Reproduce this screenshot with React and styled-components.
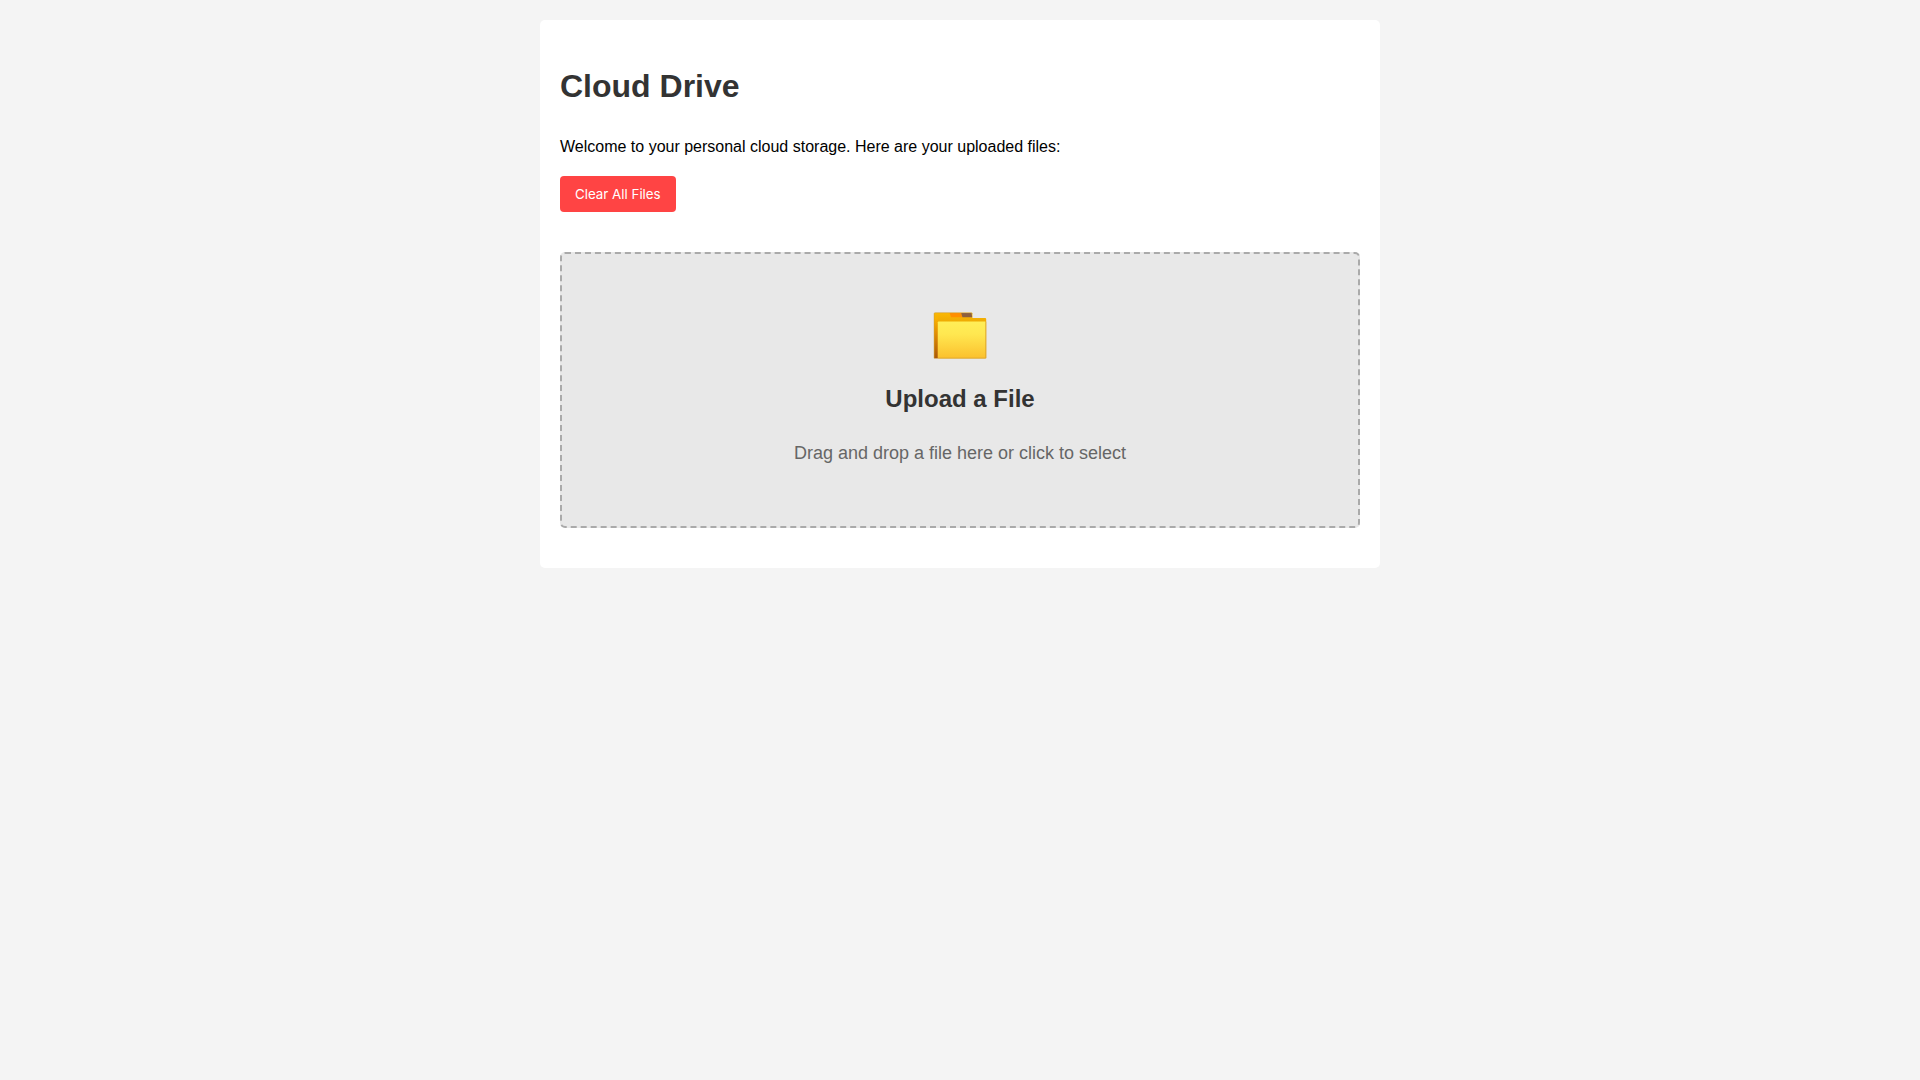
import { useRef } from "react";
import styled, { createGlobalStyle } from "styled-components";

export default function App() {
  const fileInput = useRef(null);

  const clearFiles = () => {
    fileInput.current.value = "";
  };

  return (
    <>
      <GlobalStyle />
      <SContainer>
        <STitle>Cloud Drive</STitle>
        <SWelcome>
          Welcome to your personal cloud storage. Here are your uploaded files:
        </SWelcome>
        <SClearBtn type="button" onClick={clearFiles}>
          Clear All Files
        </SClearBtn>
        <SUploadArea htmlFor="file-upload">
          <FolderIcon />
          <SUploadTitle>Upload a File</SUploadTitle>
          <SUploadTxt>Drag and drop a file here or click to select</SUploadTxt>
        </SUploadArea>
        <input ref={fileInput} id="file-upload" type="file" hidden />
      </SContainer>
    </>
  );
}

function FolderIcon() {
  return (
    <SFolderIcon viewBox="0 0 60 76" aria-hidden="true">
      <defs>
        <linearGradient id="folder-back" x1="0" y1="0" x2="0" y2="1">
          <stop offset="0" stopColor="#fbb803" />
          <stop offset="0.2" stopColor="#eeaa04" />
          <stop offset="1" stopColor="#e09a10" />
        </linearGradient>
        <linearGradient id="folder-spine" x1="0" y1="0" x2="0" y2="1">
          <stop offset="0" stopColor="#fbb300" />
          <stop offset="0.4" stopColor="#e08c04" />
          <stop offset="1" stopColor="#a8570a" />
        </linearGradient>
        <linearGradient id="folder-front" x1="0" y1="0" x2="0" y2="1">
          <stop offset="0" stopColor="#ffee58" />
          <stop offset="0.35" stopColor="#ffe750" />
          <stop offset="1" stopColor="#fbc02d" />
        </linearGradient>
      </defs>
      <path
        d="M5 18.7h36.4a1 1 0 0 1 1 1v4.2h12.8a1 1 0 0 1 1 1v39.4H4V19.7a1 1 0 0 1 1-1z"
        fill="url(#folder-back)"
      />
      <path d="M19.6 19h12l.6 4.2h-11.2z" fill="#ff8f00" />
      <path d="M31.2 19h10.3l.7 4.2h-9.8z" fill="#8d6040" />
      <path d="M4.2 23.5h3.6v40.8H4.2z" fill="url(#folder-spine)" />
      <rect x="7.8" y="27.5" width="48" height="36.8" rx="0.8" fill="url(#folder-front)" />
      <path
        d="M55.8 27.7v36.4H7.8"
        fill="none"
        stroke="#dca52c"
        strokeWidth="0.8"
      />
      <path
        d="M4.1 64.2V19.7a1 1 0 0 1 1-1h36.3a1 1 0 0 1 1 1"
        fill="none"
        stroke="#c99a3a"
        strokeWidth="0.5"
      />
    </SFolderIcon>
  );
}

const GlobalStyle = createGlobalStyle`
  body {
    margin: 0;
    padding: 20px;
    background: #f4f4f4;
    font-family: Arial, "Liberation Sans", sans-serif;
    font-size: 16px;
    line-height: 26px;
  }
`;

const SContainer = styled.main`
  max-width: 800px;
  margin: 0 auto;
  padding: 20px 20px 40px;
  background: #fff;
  border-radius: 5px;
`;

const STitle = styled.h1`
  margin: 20px 0 22px;
  color: #333;
  font-size: 32px;
  line-height: 52px;
`;

const SWelcome = styled.p`
  margin: 0 0 16px;
`;

const SClearBtn = styled.button`
  display: block;
  padding: 10px 15px;
  border: none;
  border-radius: 4px;
  background: #ff4444;
  color: #fff;
  font-family: Inter, sans-serif;
  line-height: 16px;
  cursor: pointer;
`;

const SUploadArea = styled.label`
  display: block;
  margin-top: 40px;
  padding: 40px;
  border: 2px dashed #aaa;
  border-radius: 5px;
  background: #e8e8e8;
  text-align: center;
  cursor: pointer;
`;

const SFolderIcon = styled.svg`
  display: block;
  width: 60px;
  height: 76px;
  margin: 0 auto 10px;
`;

const SUploadTitle = styled.h2`
  margin: 0 0 21px;
  color: #333;
  font-size: 24px;
  line-height: 38px;
`;

const SUploadTxt = styled.p`
  margin: 0 0 18px;
  color: #666;
  font-size: 18px;
  line-height: 29px;
`;
